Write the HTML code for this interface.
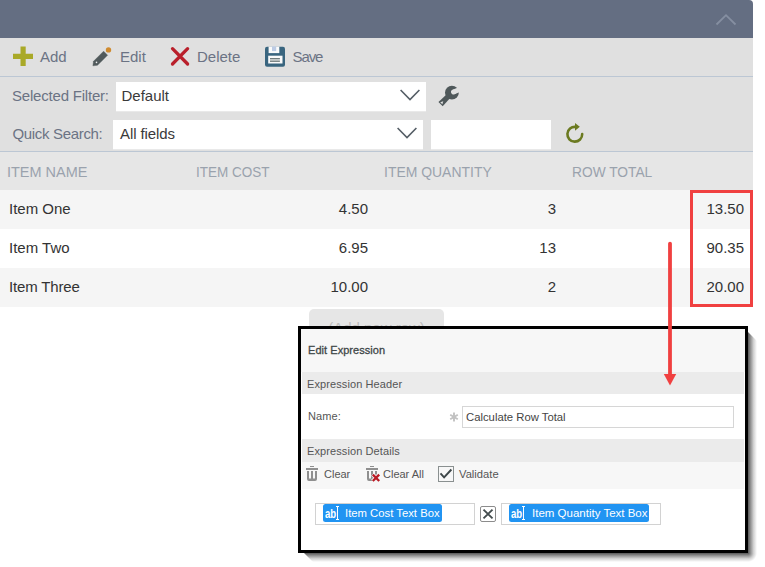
<!DOCTYPE html>
<html>
<head>
<meta charset="utf-8">
<title>Edit Expression</title>
<style>
*{box-sizing:border-box;margin:0;padding:0}
html,body{width:765px;height:567px;overflow:hidden;background:#fff}
body{position:relative;font-family:"Liberation Sans",sans-serif;color:#333}
.abs{position:absolute}
#hdr{left:0;top:0;width:753px;height:38px;background:#646e82;border-top-right-radius:4px}
#tb{left:0;top:38px;width:753px;height:38px;background:#e0e0e0}
#ln1{left:0;top:76px;width:753px;height:1px;background:#bcc7d4}
#flt{left:0;top:77px;width:753px;height:74px;background:#e0e0e0}
#ln2{left:0;top:151px;width:753px;height:1px;background:#bcc7d4}
.tbt{position:absolute;top:38px;height:38px;line-height:38px;font-size:15px;color:#6b7384;white-space:nowrap}
.lbl{position:absolute;font-size:15px;color:#6b7384;white-space:nowrap;line-height:20px}
.dd{position:absolute;background:#fff;height:30px;border-bottom:1px solid #e9e9e9;font-size:15px;color:#3a3a3a;line-height:28px;white-space:nowrap}
#th{left:0;top:152px;width:753px;height:38px;background:#e6e6e6}
.thc{position:absolute;top:152.5px;height:38px;line-height:38px;transform-origin:0 50%;font-size:15px;color:#9aa2ad;white-space:nowrap}
.row{position:absolute;left:0;width:753px;height:39px}
.c{position:absolute;height:39px;line-height:38px;font-size:15px;color:#333;white-space:nowrap}
.r{text-align:right;width:188px;padding-right:8px}
#addrow{left:309px;top:309px;width:135px;height:30px;background:#e6e6e6;border-radius:5px;color:#bdbdbd;font-size:15px;text-align:center;line-height:37px}
#dlg{left:298px;top:326px;width:450px;height:227px;background:#fff;border:3px solid #000;overflow:hidden}
#dlg .t{position:absolute;white-space:nowrap;font-size:11px;color:#555;line-height:14px}
#dlg .ab{font-size:12px;font-weight:bold;color:#fff;transform:scaleX(.8);transform-origin:0 50%}
</style>
</head>
<body>
<div id="hdr" class="abs"></div>
<svg class="abs" style="left:714px;top:12px" width="24" height="16" viewBox="0 0 24 16"><path d="M2.5 12.5 L12 3.2 L21.5 12.5" fill="none" stroke="#858fa1" stroke-width="1.8"/></svg>

<div id="tb" class="abs"></div>
<div id="ln1" class="abs"></div>
<div id="flt" class="abs"></div>
<div id="ln2" class="abs"></div>

<!-- toolbar -->
<svg class="abs" style="left:13px;top:46px" width="20" height="20" viewBox="0 0 20 20"><path d="M7.5 0.5h5.2v7.2h7.3v5.2h-7.3v7.1h-5.2v-7.1h-7.5v-5.2h7.5z" fill="#a9a928"/></svg>
<div class="tbt" style="left:40px">Add</div>

<svg class="abs" style="left:92px;top:46px" width="21" height="22" viewBox="0 0 21 22"><path d="M0.9 19.8 L1.5 15.3 L11.6 5.2 L15.6 9.2 L5.5 19.3 Z" fill="#515a5c" stroke="#515a5c" stroke-width="0.4" stroke-linejoin="round"/><circle cx="16.5" cy="3.9" r="2.7" fill="#cf8a2e"/><circle cx="4.5" cy="16.4" r="0.8" fill="#f0f0f0"/></svg>
<div class="tbt" style="left:120px">Edit</div>

<svg class="abs" style="left:169px;top:46px" width="22" height="21" viewBox="0 0 22 21"><path d="M3.5 2.7 L18.6 18 M18.6 2.7 L3.5 18" stroke="#b91f2b" stroke-width="3.3" stroke-linecap="round" fill="none"/></svg>
<div class="tbt" style="left:197px">Delete</div>

<svg class="abs" style="left:265px;top:46px" width="21" height="22" viewBox="0 0 21 22"><rect x="0" y="0.8" width="20" height="19.9" rx="2" fill="#39657f"/><rect x="3.6" y="0.6" width="10.7" height="6.5" fill="#fafafa"/><rect x="7" y="0.6" width="4.2" height="4.5" fill="#bccbe4"/><rect x="3.2" y="9.7" width="14.3" height="7.8" fill="#fafafa"/><rect x="5" y="12" width="9.9" height="1.4" fill="#6f7a7b"/><rect x="5" y="14.5" width="9.9" height="1.4" fill="#6f7a7b"/></svg>
<div class="tbt" style="left:292.5px;letter-spacing:-1.1px">Save</div>

<!-- filter rows -->
<div class="lbl" style="left:12px;top:86px;letter-spacing:-0.2px">Selected Filter:</div>
<div class="dd" style="left:116px;top:82px;width:310px;padding-left:5.5px">Default</div>
<svg class="abs" style="left:399px;top:88px" width="22" height="14" viewBox="0 0 22 14"><path d="M1.6 2 L11 11.6 L20.4 2" fill="none" stroke="#555e66" stroke-width="1.6"/></svg>
<svg class="abs" style="left:430px;top:78px" width="40" height="34" viewBox="0 0 40 34"><g transform="translate(21.9,14.7) rotate(45)" fill="#4f585a"><circle r="6.9"/><path d="M-2.5 4 L2.5 4 L3 16 L-3 16 Z"/><g transform="rotate(22)" fill="#e0e0e0"><circle cx="0" cy="-1.8" r="2.5"/><rect x="-2.5" y="-9" width="5" height="7.2"/></g><path d="M0 12.2 L1.5 15 L-1.5 15 Z" fill="#e0e0e0"/></g></svg>

<div class="lbl" style="left:12.5px;top:124px;letter-spacing:-0.33px">Quick Search:</div>
<div class="dd" style="left:113px;top:120px;width:310px;padding-left:7px;letter-spacing:-0.1px">All fields</div>
<svg class="abs" style="left:396px;top:126px" width="22" height="14" viewBox="0 0 22 14"><path d="M1.6 2 L11 11.6 L20.4 2" fill="none" stroke="#555e66" stroke-width="1.6"/></svg>
<div class="dd" style="left:431px;top:120px;width:120px"></div>
<svg class="abs" style="left:564px;top:122px" width="22" height="23" viewBox="0 0 22 23"><path d="M18.2 12.1 A7.4 7.4 0 1 1 11.6 4.9" fill="none" stroke="#6b7a20" stroke-width="2.6" stroke-linecap="round"/><path d="M11 1.1 L15.8 4.8 L11 8.8 Z" fill="#6b7a20"/></svg>

<!-- table header -->
<div id="th" class="abs"></div>
<div class="thc" style="left:7px;transform:scaleX(.965)">ITEM NAME</div>
<div class="thc" style="left:196px;transform:scaleX(.9)">ITEM COST</div>
<div class="thc" style="left:384px;transform:scaleX(.93)">ITEM QUANTITY</div>
<div class="thc" style="left:571.5px;transform:scaleX(.917)">ROW TOTAL</div>

<!-- rows -->
<div class="row" style="top:190px;background:#f5f5f5"></div>
<div class="row" style="top:229px;background:#fff"></div>
<div class="row" style="top:268px;background:#f5f5f5"></div>

<div class="c" style="left:9px;top:190px">Item One</div>
<div class="c r" style="left:188px;top:190px">4.50</div>
<div class="c r" style="left:376px;top:190px">3</div>
<div class="c r" style="left:564px;top:190px">13.50</div>

<div class="c" style="left:9px;top:229px">Item Two</div>
<div class="c r" style="left:188px;top:229px">6.95</div>
<div class="c r" style="left:376px;top:229px">13</div>
<div class="c r" style="left:564px;top:229px">90.35</div>

<div class="c" style="left:9px;top:268px;letter-spacing:-0.15px">Item Three</div>
<div class="c r" style="left:188px;top:268px">10.00</div>
<div class="c r" style="left:376px;top:268px">2</div>
<div class="c r" style="left:564px;top:268px">20.00</div>

<!-- red highlight box -->
<div class="abs" style="left:690px;top:190px;width:63px;height:117px;border:3px solid #f04040"></div>

<!-- add new row button (partly hidden) -->
<div id="addrow" class="abs">(Add new row)</div>

<!-- dialog drop shadow -->
<div class="abs" style="left:304px;top:553px;width:444px;height:9px;background:linear-gradient(to bottom,rgba(0,0,0,.66),rgba(0,0,0,.42) 30%,rgba(0,0,0,.18) 62%,rgba(0,0,0,0) 100%);clip-path:polygon(0 0,100% 0,100% 100%,9px 100%)"></div>
<div class="abs" style="left:748px;top:332px;width:9px;height:221px;background:linear-gradient(to right,rgba(0,0,0,.66),rgba(0,0,0,.42) 30%,rgba(0,0,0,.18) 62%,rgba(0,0,0,0) 100%);clip-path:polygon(0 0,100% 9px,100% 100%,0 100%)"></div>
<div class="abs" style="left:748px;top:553px;width:9px;height:9px;background:radial-gradient(circle at 0 0,rgba(0,0,0,.66),rgba(0,0,0,.42) 2.7px,rgba(0,0,0,.18) 5.6px,rgba(0,0,0,0) 9px)"></div>

<!-- dialog -->
<div id="dlg" class="abs">
  <div class="abs" style="left:0;top:0;width:444px;height:43px;background:#f7f7f7"></div>
  <div class="t" style="left:7px;top:14px;color:#3f4748;font-size:11px;letter-spacing:0.05px;-webkit-text-stroke:0.3px #3f4748">Edit Expression</div>
  <div class="abs" style="left:1px;top:43px;width:442px;height:22px;background:#ebebeb"></div>
  <div class="t" style="left:6px;top:48px;font-size:11px;letter-spacing:0.1px">Expression Header</div>
  <div class="t" style="left:7px;top:80px;font-size:11px;letter-spacing:0.1px">Name:</div>
  <svg class="abs" style="left:148px;top:83px" width="10" height="10" viewBox="0 0 10 10"><path d="M5 0.6V9.4M1.2 2.8L8.8 7.2M8.8 2.8L1.2 7.2" stroke="#c2c2c2" stroke-width="1.9" fill="none"/></svg>
  <div class="abs" style="left:161px;top:77px;width:272px;height:22px;border:1px solid #d6d6d6;background:#fff"></div>
  <div class="t" style="left:165px;top:81px;font-size:11.3px;color:#444">Calculate Row Total</div>
  <div class="abs" style="left:1px;top:110px;width:442px;height:23px;background:#ebebeb"></div>
  <div class="t" style="left:6px;top:115px;font-size:11px;letter-spacing:0.1px">Expression Details</div>
  <div class="abs" style="left:1px;top:133px;width:442px;height:27px;background:#f7f7f7"></div>

  <!-- trash -->
  <svg class="abs" style="left:4px;top:136px" width="14" height="17" viewBox="0 0 14 17"><g fill="#8f8f8f"><rect x="5" y="1" width="4" height="1"/><rect x="1" y="3" width="12" height="2"/><path d="M2 6h2v7.6h2v-7.6h2v7.6h2v-7.6h2v8a2 2 0 0 1-2 2h-6a2 2 0 0 1-2-2z"/></g></svg>
  <div class="t" style="left:23px;top:138px;font-size:11px">Clear</div>
  <svg class="abs" style="left:64px;top:136px" width="18" height="18" viewBox="0 0 18 18"><g fill="#8f8f8f"><rect x="5" y="1" width="4" height="1"/><rect x="1" y="3" width="12" height="2"/><path d="M2 6h2v7.6h2v-7.6h2v7.6h2v-7.6h2v8a2 2 0 0 1-2 2h-6a2 2 0 0 1-2-2z"/></g><path d="M7.6 9.4l6.8 6.8M14.4 9.4l-6.8 6.8" stroke="#f7f7f7" stroke-width="4" fill="none"/><path d="M7.8 9.6l6.4 6.4M14.2 9.6l-6.4 6.4" stroke="#b91a24" stroke-width="2.3" fill="none"/></svg>
  <div class="t" style="left:82px;top:138px;font-size:11px">Clear All</div>
  <div class="abs" style="left:137px;top:137px;width:16px;height:16px;border:1px solid #8a9090;background:#f7f7f7"></div>
  <svg class="abs" style="left:137px;top:137px" width="16" height="16" viewBox="0 0 16 16"><path d="M2.5 7.4L6.1 11.4L13.4 3.5" stroke="#3d4648" stroke-width="1.9" fill="none"/></svg>
  <div class="t" style="left:158px;top:138px;font-size:11.2px">Validate</div>

  <!-- expression tokens -->
  <div class="abs" style="left:14px;top:174px;width:160px;height:22px;border:1px solid #d2d2d2;background:#fff"></div>
  <div class="abs" style="left:22px;top:175px;width:119px;height:18px;background:#2194f2;border-radius:2.5px"></div>
  <div class="t ab" style="left:24px;top:177.5px">ab</div>
  <svg class="abs" style="left:34px;top:177px" width="5" height="14" viewBox="0 0 5 14"><path d="M1 0.5h3M1 13.5h3M2.5 0.5v13" stroke="#fff" stroke-width="1" fill="none"/></svg>
  <div class="t" style="left:44px;top:177px;font-size:11.3px;color:#fff">Item Cost Text Box</div>

  <div class="abs" style="left:179px;top:177px;width:16px;height:16px;border:1px solid #8c8c8c;border-radius:2px;background:#fff"></div>
  <svg class="abs" style="left:179px;top:177px" width="16" height="16" viewBox="0 0 16 16"><path d="M3.5 3.6L12.5 12.4M12.5 3.6L3.5 12.4" stroke="#434c4e" stroke-width="1.9" fill="none"/></svg>

  <div class="abs" style="left:200px;top:174px;width:160px;height:22px;border:1px solid #d2d2d2;background:#fff"></div>
  <div class="abs" style="left:208px;top:175px;width:140px;height:18px;background:#2194f2;border-radius:2.5px"></div>
  <div class="t ab" style="left:210px;top:177.5px">ab</div>
  <svg class="abs" style="left:220px;top:177px" width="5" height="14" viewBox="0 0 5 14"><path d="M1 0.5h3M1 13.5h3M2.5 0.5v13" stroke="#fff" stroke-width="1" fill="none"/></svg>
  <div class="t" style="left:231px;top:177px;font-size:11.5px;color:#fff">Item Quantity Text Box</div>
</div>

<!-- red arrow -->
<svg class="abs" style="left:660px;top:238px" width="20" height="150" viewBox="0 0 20 150"><path d="M10 5.6V138" stroke="#f04040" stroke-width="3.8" stroke-linecap="round" fill="none"/><path d="M3.8 136h12.4L10 147.6z" fill="#f04040"/></svg>
</body>
</html>
